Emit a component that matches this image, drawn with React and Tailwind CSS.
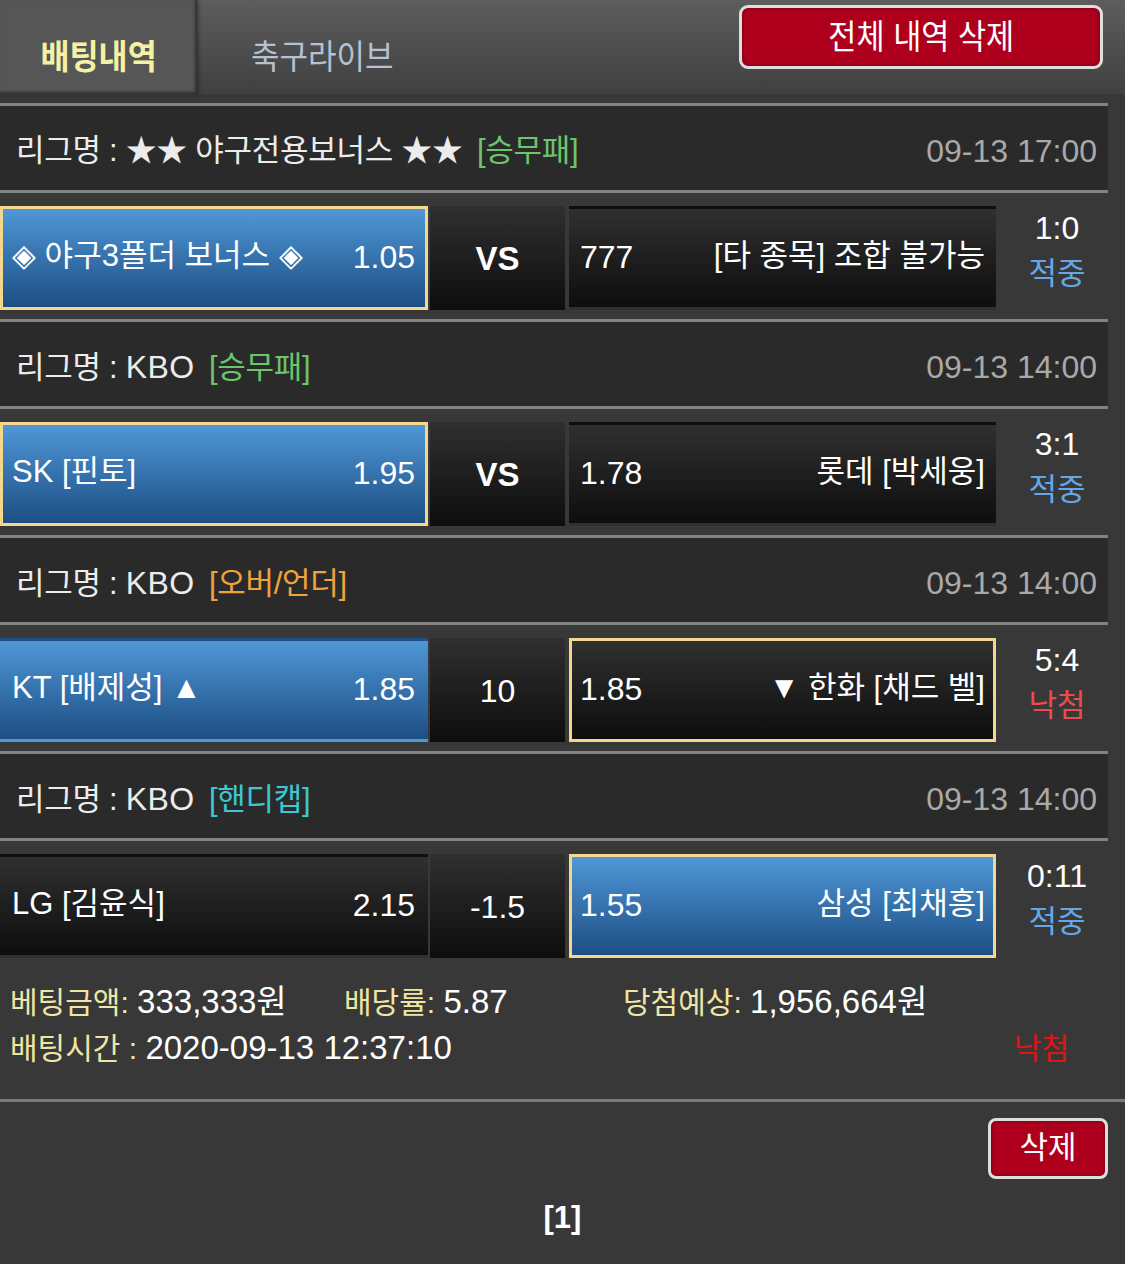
import React from "react";

const sections = [
  {
    league: "★★ 야구전용보너스 ★★",
    type: "[승무패]",
    typeColor: "text-[#6cc46c]",
    date: "09-13 17:00",
    home: { name: "◈ 야구3폴더 보너스 ◈", odds: "1.05", style: "bluesel" },
    mid: { text: "VS", bold: true },
    away: { odds: "777", name: "[타 종목] 조합 불가능", style: "dark" },
    score: "1:0",
    result: "적중",
  },
  {
    league: "KBO",
    type: "[승무패]",
    typeColor: "text-[#6cc46c]",
    date: "09-13 14:00",
    home: { name: "SK [핀토]", odds: "1.95", style: "bluesel" },
    mid: { text: "VS", bold: true },
    away: { odds: "1.78", name: "롯데 [박세웅]", style: "dark" },
    score: "3:1",
    result: "적중",
  },
  {
    league: "KBO",
    type: "[오버/언더]",
    typeColor: "text-[#f0a23c]",
    date: "09-13 14:00",
    home: { name: "KT [배제성] ▲", odds: "1.85", style: "blue" },
    mid: { text: "10", bold: false },
    away: { odds: "1.85", name: "▼ 한화 [채드 벨]", style: "darksel" },
    score: "5:4",
    result: "낙첨",
  },
  {
    league: "KBO",
    type: "[핸디캡]",
    typeColor: "text-[#3cc8d2]",
    date: "09-13 14:00",
    home: { name: "LG [김윤식]", odds: "2.15", style: "dark" },
    mid: { text: "-1.5", bold: false },
    away: { odds: "1.55", name: "삼성 [최채흥]", style: "bluesel" },
    score: "0:11",
    result: "적중",
  },
];

const cellClass = {
  bluesel:
    "bg-linear-to-b from-[#4f97d7] to-[#1d4f84] border-[3px] border-[#f3d78c]",
  blue: "bg-linear-to-b from-[#4f97d7] to-[#1d4f84] border-[3px] border-transparent",
  dark: "bg-linear-to-b from-[#303030] to-[#0e0e0e] border-[3px] border-transparent",
  darksel:
    "bg-linear-to-b from-[#303030] to-[#0e0e0e] border-[3px] border-[#f3d78c]",
};

function Section({ s }) {
  const latin = s.league === "KBO";
  return (
    <div>
      <div className="w-[1108px]">
        <div className="h-[3px] bg-[#828282]" />
        <div className="h-[84px] bg-[#2a2a2a] flex items-center justify-between pl-[16px] pr-[11px] pt-[6px]">
          <div className="text-[#ececec] text-[31px] whitespace-nowrap tracking-[-0.3px]">
            리그명 :{" "}
            {latin ? (
              <span className="text-[32px] tracking-[0.5px]">{s.league}</span>
            ) : (
              s.league
            )}{" "}
            <span className={`${s.typeColor} ml-[6px]`}>{s.type}</span>
          </div>
          <div className="text-[#a9a9a9] text-[32px]">{s.date}</div>
        </div>
        <div className="h-[3px] bg-[#828282]" />
      </div>
      <div className="flex pt-[13px] pb-[9px]">
        <div
          className={`w-[428px] h-[104px] flex items-center justify-between pl-[9px] pr-[10px] pb-[3px] text-white text-[31px] ${cellClass[s.home.style]}`}
        >
          <span className="whitespace-nowrap">{s.home.name}</span>
          <span className="text-[32px]">{s.home.odds}</span>
        </div>
        <div
          className={`ml-[2px] w-[135px] h-[104px] flex items-center justify-center text-white bg-linear-to-b from-[#303030] to-[#0e0e0e] ${
            s.mid.bold ? "font-bold text-[33px] pt-[2px]" : "text-[32px] pt-[2px]"
          }`}
        >
          {s.mid.text}
        </div>
        <div
          className={`ml-[4px] w-[427px] h-[104px] flex items-center justify-between pl-[8px] pr-[8px] pb-[3px] text-white text-[31px] ${cellClass[s.away.style]}`}
        >
          <span className="text-[32px]">{s.away.odds}</span>
          <span className="whitespace-nowrap">{s.away.name}</span>
        </div>
        <div className="w-[122px] h-[104px] flex flex-col items-center justify-center leading-[46px] -mt-[7px]">
          <div className="text-white text-[32px]">{s.score}</div>
          <div
            className={`text-[31px] ${
              s.result === "적중" ? "text-[#63a7e6]" : "text-[#ea4b4b]"
            }`}
          >
            {s.result}
          </div>
        </div>
      </div>
    </div>
  );
}

export default function App() {
  return (
    <div className="w-[1125px] min-h-[1264px] bg-[#383838] font-['Liberation_Sans','Noto_Sans_CJK_KR',sans-serif] overflow-hidden">
      <div className="h-[94px] flex bg-linear-to-b from-[#5d5d5d] to-[#404040]">
        <div className="w-[197px] bg-[#565656] shadow-[inset_-2px_-2px_3px_rgba(0,0,0,0.45),2px_0_3px_rgba(0,0,0,0.3)] flex items-center justify-center pt-[20px] text-[#f4f1a4] font-bold text-[34px]">
          <span className="inline-block scale-x-[0.93] whitespace-nowrap">배팅내역</span>
        </div>
        <div className="w-[251px] flex items-center justify-center pt-[20px] text-[#b6c1d2] text-[34px]">
          <span className="inline-block scale-x-[0.91] whitespace-nowrap">축구라이브</span>
        </div>
        <div className="flex-1" />
        <div className="mt-[5px] mr-[22px] w-[364px] h-[64px] rounded-[9px] border-[3px] border-[#dedede] bg-[#ae001d] flex items-center justify-center text-white text-[34px] shadow-[inset_0_0_4px_rgba(0,0,0,0.4)]">
          <span className="inline-block scale-x-[0.9] whitespace-nowrap">전체 내역 삭제</span>
        </div>
      </div>
      <div className="h-[9px]" />
      {sections.map((s, i) => (
        <Section key={i} s={s} />
      ))}
      <div className="pt-[12px] pl-[10px] pr-[56px] text-[30px] leading-[45px]">
        <div className="flex items-baseline">
          <div className="w-[334px] whitespace-nowrap">
            <span className="text-[#efe6a6]">베팅금액: </span>
            <span className="text-white text-[33px]">333,333원</span>
          </div>
          <div className="w-[279px] whitespace-nowrap">
            <span className="text-[#efe6a6]">배당률: </span>
            <span className="text-white text-[33px]">5.87</span>
          </div>
          <div className="whitespace-nowrap">
            <span className="text-[#efe6a6]">당첨예상: </span>
            <span className="text-white text-[33px]">1,956,664원</span>
          </div>
        </div>
        <div className="flex justify-between items-baseline">
          <div className="whitespace-nowrap">
            <span className="text-[#efe6a6]">배팅시간 : </span>
            <span className="text-white text-[33px]">2020-09-13 12:37:10</span>
          </div>
          <div className="text-[#e01414]">낙첨</div>
        </div>
      </div>
      <div className="mt-[28px] h-[3px] bg-[#7a7a7a]" />
      <div className="flex justify-end pr-[17px] pt-[16px]">
        <div className="w-[120px] h-[61px] rounded-[8px] border-[3px] border-[#dedede] bg-[#ae001d] flex items-center justify-center text-white text-[31px] shadow-[inset_0_0_4px_rgba(0,0,0,0.4)]">
          삭제
        </div>
      </div>
      <div className="flex justify-center pt-[16px] text-white font-bold text-[31px]">
        [1]
      </div>
    </div>
  );
}
